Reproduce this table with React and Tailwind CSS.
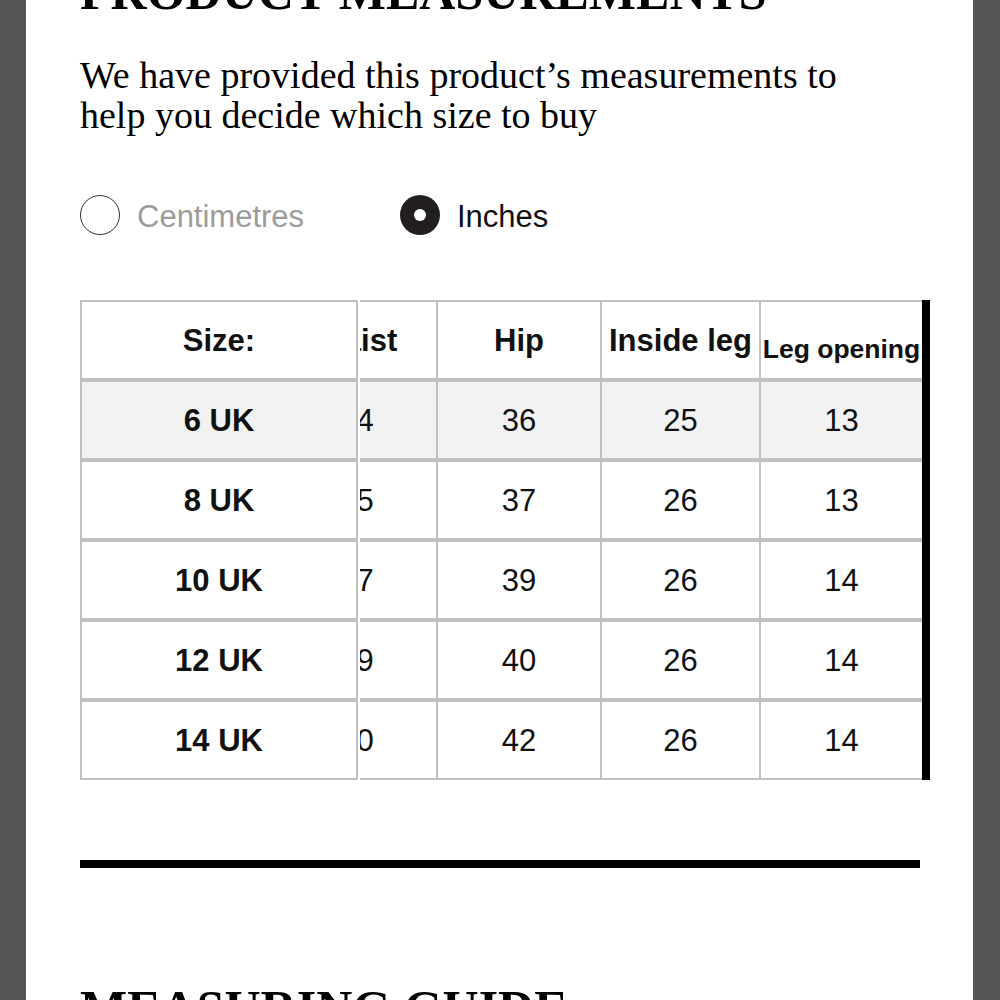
import React from "react";

const SANS = { fontFamily: '"Liberation Sans", Arial, sans-serif' };
const SERIF = { fontFamily: '"Liberation Serif", "Times New Roman", serif' };

const rows = [
  { size: "6 UK", waist: "24", hip: "36", leg: "25", open: "13", grey: true },
  { size: "8 UK", waist: "25", hip: "37", leg: "26", open: "13" },
  { size: "10 UK", waist: "27", hip: "39", leg: "26", open: "14" },
  { size: "12 UK", waist: "29", hip: "40", leg: "26", open: "14" },
  { size: "14 UK", waist: "30", hip: "42", leg: "26", open: "14" },
];

function Row({ grey, children }) {
  return (
    <div
      className={`flex h-[80px] border-t-2 border-b-2 border-[#c0c0c0] ${
        grey ? "bg-[#f2f2f2]" : "bg-white"
      }`}
    >
      {children}
    </div>
  );
}

export default function App() {
  return (
    <div className="h-[1000px] w-[1000px] overflow-hidden bg-[#555555] pl-[26px]">
      <div className="h-[1000px] w-[947px] overflow-hidden bg-white pl-[54px] text-[#111]">
        <h1
          className="mt-[-33px] h-[50px] text-[50px] font-bold leading-[50px] text-black"
          style={SERIF}
        >
          PRODUCT MEASUREMENTS
        </h1>
        <p className="mt-[38px] text-[38px] leading-[40px] text-black" style={SERIF}>
          We have provided this product’s measurements to
          <br />
          help you decide which size to buy
        </p>

        <div className="mt-[60px] flex h-[40px] items-center" style={SANS}>
          <div className="flex w-[320px] items-center">
            <div className="h-[40px] w-[40px] rounded-full border-[1.5px] border-[#333]" />
            <span className="ml-[17px] pt-[4px] text-[31px] text-[#9c9c9c]">Centimetres</span>
          </div>
          <div className="flex items-center">
            <div className="flex h-[40px] w-[40px] items-center justify-center rounded-full bg-[#231f20]">
              <div className="h-[12px] w-[12px] rounded-full bg-white" />
            </div>
            <span className="ml-[17px] pt-[4px] text-[31px] text-[#111]">Inches</span>
          </div>
        </div>

        <div className="mt-[65px] flex" style={SANS}>
          <div className="w-[278px] border-l-2 border-r-2 border-[#c0c0c0]">
            <Row>
              <div className="flex flex-1 items-center justify-center pt-[3px] text-[31px] font-bold">Size:</div>
            </Row>
            {rows.map((r) => (
              <Row key={r.size} grey={r.grey}>
                <div className="flex flex-1 items-center justify-center pt-[3px] text-[31px] font-bold">
                  {r.size}
                </div>
              </Row>
            ))}
          </div>
          <div className="ml-[2px] w-[562px] overflow-hidden">
            <div className="ml-[-83px] w-[645px]">
              <Row>
                <div className="flex w-[161px] items-center justify-center border-r-2 border-[#c0c0c0] pt-[3px] text-[31px] font-bold">
                  Waist
                </div>
                <div className="flex w-[164px] items-center justify-center border-r-2 border-[#c0c0c0] pt-[3px] text-[31px] font-bold">
                  Hip
                </div>
                <div className="flex w-[159px] items-center justify-center border-r-2 border-[#c0c0c0] pt-[3px] text-[31px] font-bold whitespace-nowrap">
                  Inside leg
                </div>
                <div className="flex w-[161px] items-center justify-center pt-[20px] text-[26.5px] font-bold whitespace-nowrap">
                  Leg opening
                </div>
              </Row>
              {rows.map((r) => (
                <Row key={r.size} grey={r.grey}>
                  <div className="flex w-[161px] items-center justify-center border-r-2 border-[#c0c0c0] pt-[3px] text-[31px]">
                    {r.waist}
                  </div>
                  <div className="flex w-[164px] items-center justify-center border-r-2 border-[#c0c0c0] pt-[3px] text-[31px]">
                    {r.hip}
                  </div>
                  <div className="flex w-[159px] items-center justify-center border-r-2 border-[#c0c0c0] pt-[3px] text-[31px]">
                    {r.leg}
                  </div>
                  <div className="flex w-[161px] items-center justify-center pt-[3px] text-[31px]">{r.open}</div>
                </Row>
              ))}
            </div>
          </div>
          <div className="w-[8px] bg-black" />
        </div>

        <div className="mt-[80px] h-[8px] w-[840px] bg-black" />

        <h2
          className="mt-[115px] h-[50px] text-[50px] font-bold leading-[50px] text-black"
          style={SERIF}
        >
          MEASURING GUIDE
        </h2>
      </div>
    </div>
  );
}
